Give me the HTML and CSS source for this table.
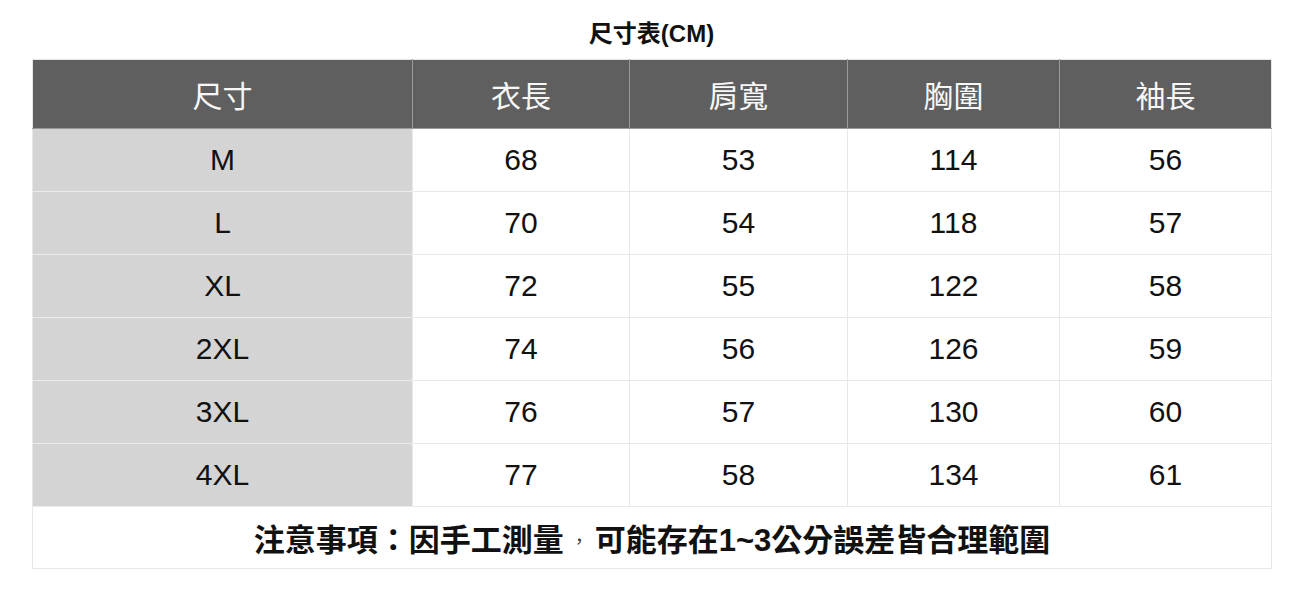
FILE: index.html
```html
<!DOCTYPE html>
<html lang="zh-Hant">
<head>
<meta charset="utf-8">
<title>尺寸表(CM)</title>
<link rel="stylesheet" href="styles.css">
</head>
<body>
<main class="page">
  <h1 class="title">尺寸表(CM)</h1>
  <table class="size-table">
    <colgroup>
      <col class="c-size">
      <col class="c-a">
      <col class="c-b">
      <col class="c-c">
      <col class="c-d">
    </colgroup>
    <thead>
      <tr>
        <th>尺寸</th><th>衣長</th><th>肩寬</th><th>胸圍</th><th>袖長</th>
      </tr>
    </thead>
    <tbody>
      <tr><td class="size">M</td><td>68</td><td>53</td><td>114</td><td>56</td></tr>
      <tr><td class="size">L</td><td>70</td><td>54</td><td>118</td><td>57</td></tr>
      <tr><td class="size">XL</td><td>72</td><td>55</td><td>122</td><td>58</td></tr>
      <tr><td class="size">2XL</td><td>74</td><td>56</td><td>126</td><td>59</td></tr>
      <tr><td class="size">3XL</td><td>76</td><td>57</td><td>130</td><td>60</td></tr>
      <tr><td class="size">4XL</td><td>77</td><td>58</td><td>134</td><td>61</td></tr>
    </tbody>
    <tfoot>
      <tr><td colspan="5" class="note">注意事項：因手工測量<span class="comma">，</span>可能存在1~3公分誤差皆合理範圍</td></tr>
    </tfoot>
  </table>
</main>
</body>
</html>
```

FILE: styles.css
```css
html, body {
  margin: 0;
  padding: 0;
  background: #ffffff;
}

body {
  font-family: "Liberation Sans", "Noto Sans CJK TC", sans-serif;
  color: #111111;
}

.page {
  padding: 20px 36px 0 32px;
}

.title {
  margin: 0 0 11px;
  font-size: 24px;
  line-height: 28px;
  font-weight: bold;
  text-align: center;
  color: #111111;
}

.size-table {
  width: 1239px;
  border-collapse: collapse;
  table-layout: fixed;
  border: 1px solid #e6e6e6;
}

.c-size { width: 380px; }
.c-a { width: 217px; }
.c-b { width: 218px; }
.c-c { width: 212px; }
.c-d { width: 212px; }

.size-table th {
  background: #5f5f5f;
  color: #f7f7f7;
  font-family: "Noto Sans CJK TC", "Liberation Sans", sans-serif;
  font-weight: normal;
  font-size: 30px;
  height: 68px;
  padding: 0;
  border: 1px solid #9a9a9a;
  border-top-color: #e6e6e6;
  text-align: center;
}

.size-table th:first-child {
  border-left-color: #e6e6e6;
}

.size-table th:last-child {
  border-right-color: #e6e6e6;
}

.size-table td {
  height: 62px;
  padding: 0;
  border: 1px solid #e8e8e8;
  text-align: center;
  font-size: 30px;
  color: #111111;
}

.size-table td.size {
  background: #d4d4d4;
  border-bottom-color: #ececec;
  border-top-color: #ececec;
}

.size-table td.note {
  font-family: "Liberation Sans", "Noto Sans CJK TC", sans-serif;
  font-weight: bold;
  font-size: 31px;
  height: 61px;
  color: #111111;
}

.comma {
  display: inline-block;
  width: 31px;
  font-family: "Noto Sans CJK TC", sans-serif;
  font-weight: normal;
  font-size: 18px;
  text-align: center;
  vertical-align: 3px;
  color: #333333;
}
```
